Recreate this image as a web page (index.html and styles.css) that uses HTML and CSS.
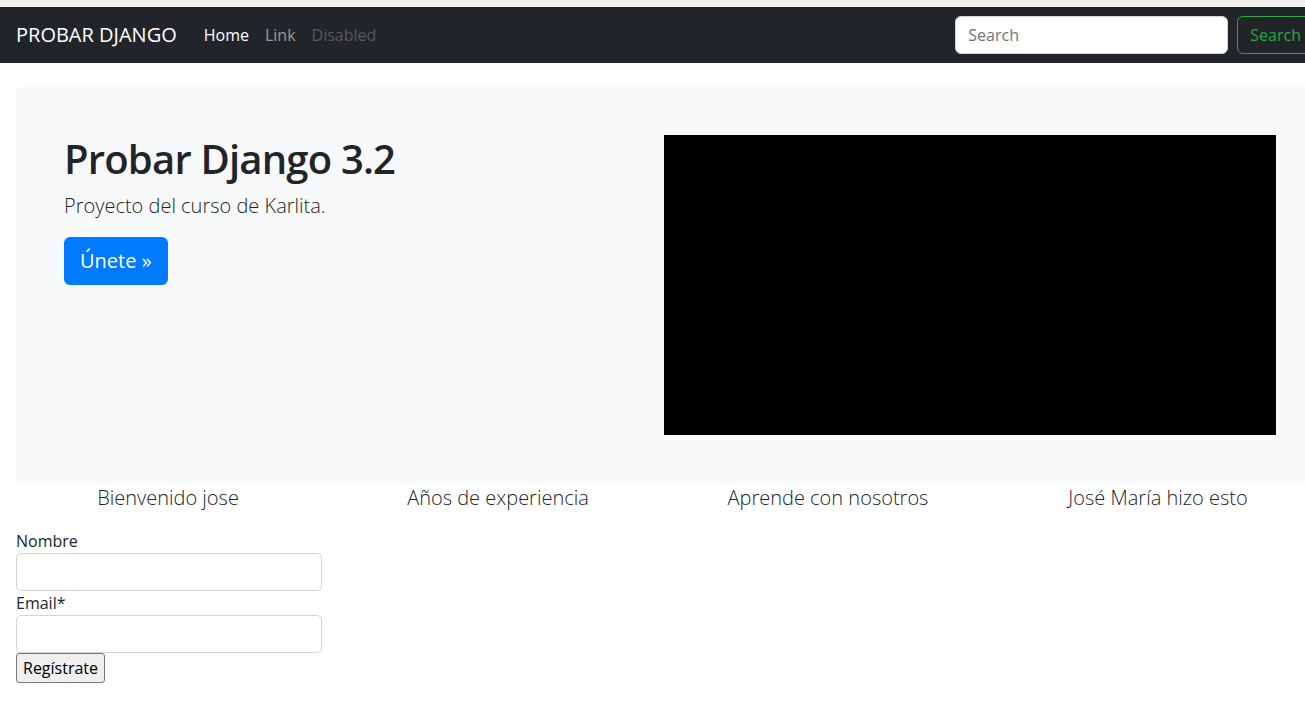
FILE: index.html
```html
<!DOCTYPE html>
<html lang="es">
<head>
<meta charset="utf-8">
<title>Probar Django</title>
<link rel="stylesheet" href="styles.css">
</head>
<body>
<div class="topstrip"></div>
<nav class="navbar">
  <a class="brand" href="#">PROBAR DJANGO</a>
  <ul class="nav">
    <li><a class="nav-link active" href="#">Home</a></li>
    <li><a class="nav-link" href="#">Link</a></li>
    <li><a class="nav-link disabled" href="#">Disabled</a></li>
  </ul>
  <form class="search">
    <input class="search-input" type="search" placeholder="Search">
    <button class="search-btn" type="button">Search</button>
  </form>
</nav>
<main class="page">
  <section class="jumbo">
    <div class="jumbo-text">
      <h1 class="jumbo-title">Probar Django 3.2</h1>
      <p class="lead">Proyecto del curso de Karlita.</p>
      <a class="btn-primary" href="#">Únete »</a>
    </div>
    <div class="jumbo-media">
      <div class="video"></div>
    </div>
  </section>
  <section class="features">
    <div class="feature">Bienvenido jose</div>
    <div class="feature">Años de experiencia</div>
    <div class="feature">Aprende con nosotros</div>
    <div class="feature">José María hizo esto</div>
  </section>
  <form class="signup">
    <label class="field-label" for="nombre">Nombre</label>
    <input class="field-input" id="nombre" type="text">
    <label class="field-label" for="email">Email*</label>
    <input class="field-input" id="email" type="email">
    <button class="submit" type="button">Regístrate</button>
  </form>
</main>
</body>
</html>
```

FILE: styles.css
```css
* { box-sizing: border-box; }
body {
  margin: 0;
  font-family: "Open Sans", "Noto Sans", sans-serif;
  font-size: 16px;
  line-height: 1.5;
  color: #212529;
  background: #fff;
  overflow-x: hidden;
}
.topstrip {
  height: 7px;
  background: #f0efee;
}
.navbar {
  width: 1330px;
  height: 56px;
  background: #212529;
  display: flex;
  align-items: center;
  padding: 0 16px;
}
.brand {
  color: #fff;
  font-size: 20px;
  text-decoration: none;
  margin-right: 19px;
  line-height: 30px;
}
.nav {
  list-style: none;
  margin: 0;
  padding: 0;
  display: flex;
}
.nav-link {
  display: block;
  padding: 8px;
  color: rgba(255,255,255,.55);
  text-decoration: none;
}
.nav-link.active { color: #fff; }
.nav-link.disabled { color: rgba(255,255,255,.25); }
.search {
  margin-left: auto;
  display: flex;
  align-items: center;
}
.search-input {
  width: 273px;
  height: 38px;
  border: 1px solid #ced4da;
  border-radius: 6px;
  padding: 6px 12px;
  font: inherit;
  color: #212529;
  margin-right: 9px;
}
.search-input::placeholder { color: #6c757d; }
.search-btn {
  height: 38px;
  padding: 6px 12px;
  font: inherit;
  color: #28a745;
  background: transparent;
  border: 1px solid #28a745;
  border-radius: 6px;
}
.page {
  width: 1328px;
  padding: 24px 16px 0;
}
.jumbo {
  background: #f8f9fa;
  border-radius: 6px;
  padding: 48px;
  display: grid;
  grid-template-columns: 600px 1fr;
}
.jumbo-title {
  margin: 0 0 8px;
  font-size: 40px;
  font-weight: 600;
  line-height: 1.2;
  letter-spacing: -0.8px;
}
.lead {
  margin: 0 0 16px;
  font-size: 20px;
  font-weight: 300;
  line-height: 30px;
}
.btn-primary {
  display: inline-block;
  background: #007bff;
  color: #fff;
  text-decoration: none;
  font-size: 20px;
  line-height: 30px;
  padding: 9px 16px;
  border-radius: 6px;
}
.video {
  width: 612px;
  height: 300px;
  background: #000;
}
.features {
  display: grid;
  grid-template-columns: repeat(4, 330px);
  margin-left: -13px;
  margin-bottom: 16px;
}
.feature {
  text-align: center;
  font-size: 20px;
  font-weight: 300;
  line-height: 30px;
}
.signup {
  display: flex;
  flex-direction: column;
  align-items: flex-start;
}
.field-label {
  display: block;
  line-height: 24px;
}
.field-input {
  display: block;
  width: 306px;
  height: 38px;
  border: 1px solid #ced4da;
  border-radius: 5px;
  font: inherit;
  padding: 6px 12px;
}
.submit {
  font: inherit;
  font-size: 16px;
  line-height: 24px;
  padding: 2px 6px;
  color: #000;
  background: #efefef;
  border: 1px solid #767676;
  border-radius: 3px;
}
```
